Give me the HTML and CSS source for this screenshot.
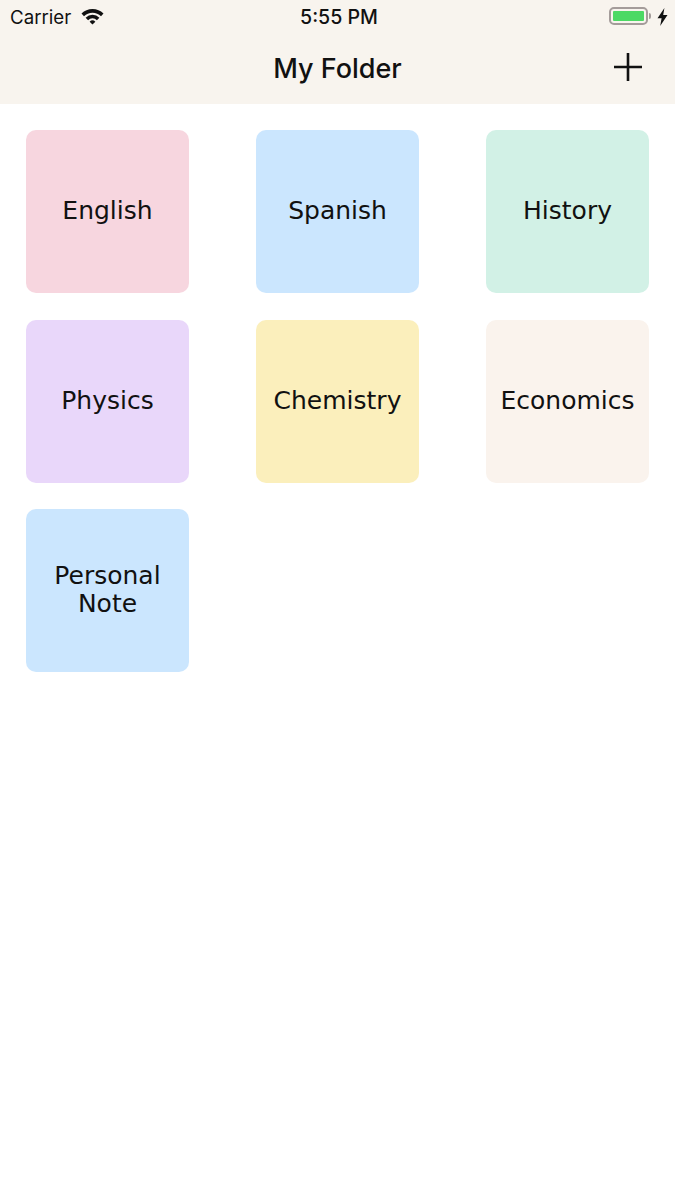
FILE: index.html
```html
<!DOCTYPE html>
<html lang="en">
<head>
    <meta charset="UTF-8">
    <meta name="viewport" content="width=device-width, initial-scale=1.0">
    <title>My Folder</title>
    <link rel="stylesheet" href="styles.css">
</head>
<body>
    <div class="top">
        <!-- Status bar -->
        <div class="status">
            <div class="status-left">
                <span>Carrier</span>
                <svg class="wifi" width="23" height="17" viewBox="0 0 23 17">
                    <path d="M0.5 5.6 A15.5 15.5 0 0 1 22.5 5.6 L20 8.2 A12 12 0 0 0 3 8.2 Z" fill="#111"/>
                    <path d="M4.6 9.7 A9.8 9.8 0 0 1 18.4 9.7 L15.9 12.2 A6.2 6.2 0 0 0 7.1 12.2 Z" fill="#111"/>
                    <path d="M8.6 13.7 A4.1 4.1 0 0 1 14.4 13.7 L11.5 16.6 Z" fill="#111"/>
                </svg>
            </div>
            <div class="status-time">5:55 PM</div>
            <div class="status-right">
                <div class="battery"><div class="battery-fill"></div></div>
                <div class="battery-tip"></div>
                <svg class="bolt" width="11" height="18" viewBox="0 0 11 18">
                    <path d="M7.4 0 L0.5 10.2 H4.6 L3.2 18 L10.5 7.1 H6.2 Z" fill="#111"/>
                </svg>
            </div>
        </div>

        <!-- Nav bar -->
        <div class="nav">
            <h1>My Folder</h1>
            <svg class="add" width="30" height="30" viewBox="0 0 30 30">
                <path d="M15 1 V29 M1 15 H29" stroke="#111" stroke-width="2.6" fill="none"/>
            </svg>
        </div>
    </div>

    <!-- Folders -->
    <div class="folders">
        <div class="folder pink">English</div>
        <div class="folder blue">Spanish</div>
        <div class="folder green">History</div>
        <div class="folder purple">Physics</div>
        <div class="folder yellow">Chemistry</div>
        <div class="folder cream">Economics</div>
        <div class="folder blue">Personal Note</div>
    </div>
</body>
</html>
```

FILE: styles.css
```css
body {
    font-family: "Inter", "Liberation Sans", sans-serif;
    background-color: #fff;
    margin: 0;
    color: #111;
}
.top {
    background: #f8f4ee;
    height: 104px;
}
.status {
    display: flex;
    justify-content: space-between;
    align-items: center;
    height: 34px;
    padding: 0 7px 0 10px;
    font-size: 18.7px;
}
.status-left {
    display: flex;
    align-items: center;
    gap: 10px;
    width: 200px;
}
.wifi {
    margin-top: -2px;
}
.status-time {
    font-weight: 500;
    font-size: 19.6px;
}
.status-right {
    display: flex;
    align-items: center;
    justify-content: flex-end;
    width: 200px;
}
.battery {
    box-sizing: border-box;
    width: 39px;
    height: 18px;
    margin-top: -2px;
    border: 2px solid #a49c9a;
    border-radius: 5px;
    padding: 2px;
}
.battery-fill {
    height: 100%;
    background: #4cd964;
    border-radius: 1px;
}
.battery-tip {
    width: 2px;
    height: 6px;
    margin-top: -2px;
    margin-left: 1px;
    background: #a49c9a;
    border-radius: 0 2px 2px 0;
}
.bolt {
    margin-left: 6px;
    margin-top: -1px;
}
.nav {
    display: flex;
    justify-content: center;
    align-items: center;
    box-sizing: border-box;
    height: 70px;
    padding-bottom: 2px;
    position: relative;
}
.nav h1 {
    margin: 0;
    font-size: 27px;
    font-weight: 550;
}
.add {
    position: absolute;
    right: 32px;
    top: 18px;
}
.folders {
    display: grid;
    grid-template-columns: repeat(3, 163px);
    justify-content: space-between;
    row-gap: 26.5px;
    padding: 26px;
}
.folder {
    display: flex;
    align-items: center;
    justify-content: center;
    box-sizing: border-box;
    height: 163px;
    padding: 0 20px 1px;
    border-radius: 10px;
    text-align: center;
    font-family: "DejaVu Sans", sans-serif;
    font-size: 25px;
    line-height: 28px;
}
.pink { background: #f7d6df; }
.blue { background: #cbe6fe; }
.green { background: #d2f1e6; }
.purple { background: #e9d7fa; }
.yellow { background: #fbefbc; }
.cream { background: #faf3ed; }
```
